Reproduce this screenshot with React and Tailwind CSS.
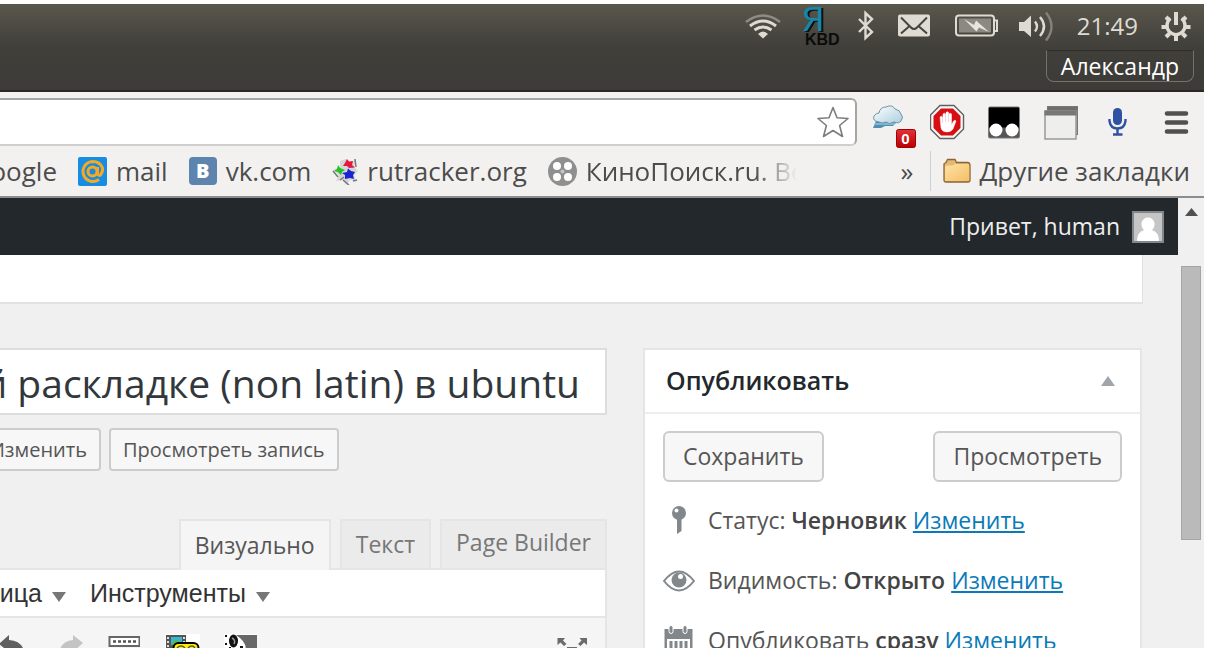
import React from 'react';

function WifiIcon() {
  return (
    <svg width="42" height="34" viewBox="741 9 42 34" fill="none" aria-hidden="true">
      <path d="M744 22 Q761 9 778 22" stroke="#8e8b82" strokeWidth="2.6" />
      <path d="M748 26 Q761 16 774 26" stroke="#dfdbd2" strokeWidth="3" />
      <path d="M752.500 30 Q761 24 769.500 30" stroke="#dfdbd2" strokeWidth="3" />
      <path d="M756 34 Q761 29 766 34 L761 38.500Z" fill="#dfdbd2" />
    </svg>
  );
}

function KeyboardIcon() {
  return (
    <svg width="40" height="42" viewBox="799 5 40 42" className="overflow-visible" aria-hidden="true">
      <text x="800" y="31" fontSize="37" fill="#1487ab" fontFamily='"Liberation Mono", monospace' className="drop-shadow-[2px_1px_0_#111]">Я</text>
      <text x="803" y="45" fontSize="16" fontWeight="700" fill="#0b0b0b" fontFamily='"Liberation Sans", sans-serif'>KBD</text>
    </svg>
  );
}

function BluetoothIcon() {
  return (
    <svg width="22" height="34" viewBox="855 9 22 34" fill="none" stroke="#dfdbd2" strokeWidth="2.4" aria-hidden="true">
      <path d="M857 19 L870 32 L863.500 38 V13 L870 19 L857 32" />
    </svg>
  );
}

function MailIcon() {
  return (
    <svg width="42" height="34" viewBox="893 9 42 34" aria-hidden="true">
      <rect x="896" y="14.500" width="32" height="22" rx="2" fill="#dfdbd2" />
      <path d="M899 17.500 L909 27.500 Q912 30.500 915 27.500 L925 17.500 M899 33.500 L907 26.500 M925 33.500 L917 26.500" fill="none" stroke="#45433d" strokeWidth="2" />
    </svg>
  );
}

function BatteryIcon() {
  return (
    <svg width="47" height="34" viewBox="951 9 47 34" aria-hidden="true">
      <rect x="954" y="15.500" width="38" height="20" rx="3" fill="none" stroke="#dfdbd2" strokeWidth="2" />
      <rect x="957" y="18.500" width="32" height="14" fill="#8b8982" />
      <path d="M993 20.500 H995 V31 H993" fill="none" stroke="#dfdbd2" strokeWidth="2" />
      <path d="M962 19 L972 25 L974 20.500 L987 32 L977 27.500 L974.500 31.500Z" fill="#e9e5dc" />
    </svg>
  );
}

function VolumeIcon() {
  return (
    <svg width="45" height="34" viewBox="1014 9 45 34" fill="none" strokeWidth="2.4" aria-hidden="true">
      <path d="M1017 22 H1022 L1029 15.500 V37 L1022 31 H1017Z" fill="#dfdbd2" />
      <path d="M1033 21.500 Q1037 26.500 1033 31.500" stroke="#dfdbd2" />
      <path d="M1038 17 Q1046 26.500 1038 36" stroke="#dfdbd2" />
      <path d="M1044 12.500 Q1055 26.500 1044 40.500" stroke="#85827a" />
    </svg>
  );
}

function SessionIcon() {
  return (
    <svg width="38" height="34" viewBox="1154 8 38 34" fill="none" stroke="#dfdbd2" aria-hidden="true">
      <path d="M1170.500 17.500 A9 9 0 1 0 1181.500 17.500" strokeWidth="3.4" />
      <path d="M1176 11 V24" strokeWidth="4" />
      <path d="M1161.500 26 H1167 M1185 26 H1190.500 M1176 35 V40 M1166 16 L1169.500 19.500 M1186 16 L1182.500 19.500 M1166 36 L1169.500 32.500 M1186 36 L1182.500 32.500" strokeWidth="4" />
    </svg>
  );
}

function StarIcon() {
  return (
    <svg width="34" height="34" viewBox="0 0 34 34" aria-hidden="true">
      <path d="M17 2.500 L21 12.800 L32 13.500 L23.600 20.500 L26.500 31.500 L17 25.500 L7.500 31.500 L10.400 20.500 L2 13.500 L13 12.800Z" fill="#fff" stroke="#7d7d7d" strokeWidth="1.600" strokeLinejoin="round" />
    </svg>
  );
}

function CloudIcon() {
  return (
    <svg width="43" height="46" viewBox="872 99 43 46" className="overflow-visible" aria-hidden="true">
      <defs>
        <linearGradient id="cloud" x1="0" y1="0" x2="1" y2="1">
          <stop offset="0" stopColor="#ffffff" />
          <stop offset="1" stopColor="#a9cede" />
        </linearGradient>
        <linearGradient id="badge" x1="0" y1="0" x2="0" y2="1">
          <stop offset="0" stopColor="#e3333b" />
          <stop offset="1" stopColor="#b80000" />
        </linearGradient>
      </defs>
      <path d="M876 121 H898 L893 126 H885 L881 128 H873Z" fill="#4f8fb4" />
      <path d="M874 124 H895" stroke="#a8cfe0" strokeWidth="1.200" />
      <path d="M879 122 Q872 121 874 116 Q876 113 879 113 Q880 107 886 107 Q892 104 895 109 Q900 110 901 114 Q904 117 901 121 Q899 124 894 122 Q889 125 886 122 Q882 124 879 122Z" fill="url(#cloud)" stroke="#6c94a5" strokeWidth="1" />
      <rect x="896.500" y="129.500" width="19" height="18" rx="2" fill="url(#badge)" stroke="#a40000" />
      <text x="905.500" y="144" textAnchor="middle" fontSize="15" fontWeight="700" fill="#fff" fontFamily='"Liberation Sans", sans-serif'>0</text>
    </svg>
  );
}

function AdblockIcon() {
  return (
    <svg width="43" height="46" viewBox="930 99 43 46" aria-hidden="true">
      <path d="M940 105.500 H954 L963.500 115 V129 L954 138.500 H940 L930.500 129 V115Z" fill="#f8f8f8" stroke="#606060" strokeWidth="1.400" />
      <path d="M941 108.500 H953 L960.500 116 V128 L953 135.500 H941 L933.500 128 V116Z" fill="#d80f12" />
      <path d="M940 117 q1.500 -1.500 2.500 0 V123 H943 V114 q1.500 -1.500 2.500 0 V122 H946 V112.500 q1.500 -1.500 2.600 0 V122 H949 V114 q1.500 -1.500 2.500 0 V125 L953.500 121 q2 -1.500 2.500 0 L953 129 Q951 132 947 132 Q942 132 941 128 Z" fill="#fff" stroke="#fff" strokeWidth="0.500" />
    </svg>
  );
}

function MaskIcon() {
  return (
    <svg width="41" height="46" viewBox="988 99 41 46" aria-hidden="true">
      <rect x="988.500" y="107" width="31" height="31" rx="1.500" fill="#565656" stroke="#777" />
      <rect x="989" y="107.500" width="30" height="20" fill="#000" />
      <circle cx="996" cy="130" r="6.500" fill="#fff" />
      <circle cx="1012" cy="130" r="6.500" fill="#fff" />
    </svg>
  );
}

function WindowsIcon() {
  return (
    <svg width="46" height="46" viewBox="1044 99 46 46" aria-hidden="true">
      <rect x="1047.500" y="106.500" width="30" height="28" fill="#aaa" stroke="#777" />
      <rect x="1048" y="107" width="29" height="4" fill="#6e6e6e" />
      <rect x="1045" y="111" width="31" height="28" fill="#eeeeec" stroke="#999" strokeWidth="1.500" />
      <rect x="1044.500" y="110.500" width="32" height="5" fill="#777" />
    </svg>
  );
}

function MicIcon() {
  return (
    <svg width="42" height="46" viewBox="1105 99 42 46" fill="none" aria-hidden="true">
      <rect x="1113" y="108" width="9" height="17" rx="4.500" fill="#2f51a3" />
      <path d="M1109.500 119 V121 Q1110.500 128.500 1117.500 128.500 Q1124.500 128.500 1125.500 121 V119" stroke="#2f51a3" strokeWidth="2.400" />
      <path d="M1117.500 128 V134 M1113 134.500 H1122.500" stroke="#2f51a3" strokeWidth="2.400" />
    </svg>
  );
}

function MenuIcon() {
  return (
    <svg width="30" height="46" viewBox="1162 99 30 46" stroke="#505050" strokeWidth="4.600" strokeLinecap="round" aria-hidden="true">
      <path d="M1167 113.500 H1186 M1167 122.500 H1186 M1167 131.500 H1186" />
    </svg>
  );
}

function AtIcon() {
  return (
    <svg width="29" height="29" viewBox="0 0 29 29" fill="none" stroke="#f7a823" aria-hidden="true">
      <rect width="29" height="29" rx="2" fill="#168de2" stroke="none" />
      <circle cx="14.500" cy="14.500" r="4.500" strokeWidth="3" />
      <path d="M19.500 10 V16 Q20 19 22.500 18 Q25 15 24.500 11 Q22 4.500 14.500 4.500 A10 10 0 1 0 21 22.500" strokeWidth="3" />
    </svg>
  );
}

function VkIcon() {
  return (
    <span aria-hidden="true" className="flex size-7 items-center justify-center rounded-sm bg-[#5d84ae] text-xl leading-none font-black text-white">
      B
    </span>
  );
}

function TrackerIcon() {
  return (
    <svg width="26" height="28" viewBox="335 158 26 28" aria-hidden="true">
      <path d="M349 160 L353 164 L359 160 L357 168 L361 172 L357 176 L359 182 L353 181 L349 186 L346 181 L339 182 L342 176 L336 171 L343 168 L343 162Z" fill="#d6d6d6" />
      <path d="M358 160 L359 168 M343 181 L347 178 M336 172 L341 178 M356 182 L360 181 M352 186 L346 181" stroke="#777" strokeWidth="1.500" />
      <path d="M350 160 L352 162.500 L356 162 L355 166 L358 168.500 L352 169 L350 167 L346 167 L348 164Z" fill="#e5173f" />
      <path d="M341 166 L343 169 L348 171 L345 173 L344 176 L341 173 L337 172 L340 170Z" fill="#21c321" />
      <path d="M351 169.500 L354 172 L358 173 L356 176 L357 180 L353 179 L348 180 L348 176 L345 174 L350 173Z" fill="#1a24d4" />
    </svg>
  );
}

function ReelIcon() {
  return (
    <svg width="29" height="29" viewBox="0 0 29 29" fill="#fff" aria-hidden="true">
      <circle cx="14.500" cy="14.500" r="14.500" fill="#8f8f8f" />
      <circle cx="9" cy="9" r="4" />
      <circle cx="20" cy="9" r="4" />
      <circle cx="9" cy="20" r="4" />
      <circle cx="20" cy="20" r="4" />
      <circle cx="14.500" cy="14.500" r="2" fill="#c4c4c4" />
    </svg>
  );
}

function FolderIcon() {
  return (
    <svg width="28" height="26" viewBox="0 0 28 26" aria-hidden="true">
      <defs>
        <linearGradient id="folder" x1="0" y1="0" x2="1" y2="1">
          <stop offset="0" stopColor="#ffe2a4" />
          <stop offset="1" stopColor="#f3bf68" />
        </linearGradient>
      </defs>
      <path d="M1 22 V6 Q2 5 3 4.500 L4.500 1.500 H12 L13.500 4.500 H25 Q27 5 27 7 V22 Q27 24 25 24 H3 Q1 24 1 22Z" fill="#e3b976" stroke="#8d6533" strokeWidth="1.300" />
      <path d="M2 9 Q2 7.500 4 7.500 H10 L12 6 H25 Q26.200 6 26.200 8 V23 H2Z" fill="url(#folder)" />
    </svg>
  );
}

function PinIcon() {
  return (
    <svg width="32" height="32" viewBox="663 504 32 32" aria-hidden="true">
      <circle cx="679" cy="513" r="7" fill="#82878c" />
      <path d="M677 519 H681.500 V531 L677 534Z" fill="#82878c" />
      <circle cx="676.500" cy="510.500" r="2" fill="#fff" />
    </svg>
  );
}

function EyeIcon() {
  return (
    <svg width="32" height="32" viewBox="663 565 32 32" aria-hidden="true">
      <path d="M664 582 Q679 563 694 582 Q679 601 664 582Z" fill="#fff" stroke="#82878c" strokeWidth="2" />
      <circle cx="679" cy="581" r="7.500" fill="#82878c" />
      <circle cx="680.500" cy="577.500" r="2.500" fill="#fff" />
    </svg>
  );
}

function CalendarIcon() {
  return (
    <svg width="32" height="32" viewBox="663 624 32 32" fill="#82878c" aria-hidden="true">
      <path d="M664.500 629 H692.500 V656 H664.500Z M667 639 V654 H690 V639Z" fillRule="evenodd" />
      <rect x="669" y="625.500" width="4" height="8" rx="2" stroke="#fff" />
      <rect x="683" y="625.500" width="4" height="8" rx="2" stroke="#fff" />
      <path d="M669.500 641 H672.500 V653 H669.500Z M674.500 641 H677.500 V653 H674.500Z M679.500 641 H682.500 V653 H679.500Z M684.500 641 H687.500 V653 H684.500Z" />
    </svg>
  );
}

function UndoIcon() {
  return (
    <svg width="32" height="32" viewBox="-4 626 32 32" aria-hidden="true">
      <path d="M-1 644 L9 635 V640 Q24 641 25 656 H20 Q18 648 9 648 V652Z" fill="#5f5f5f" />
    </svg>
  );
}

function RedoIcon() {
  return (
    <svg width="32" height="32" viewBox="52 626 32 32" aria-hidden="true">
      <path d="M83 643 L73 635 V640 Q60 641 58 656 H63 Q65 648 73 648 V652Z" fill="#c4c4c4" />
    </svg>
  );
}

function KeysIcon() {
  return (
    <svg width="32" height="32" viewBox="110 626 32 32" aria-hidden="true">
      <rect x="111.500" y="637" width="30" height="9" fill="#fff" stroke="#666" strokeWidth="2" />
      <path d="M115 641.500 H139" stroke="#555" strokeWidth="2.500" strokeDasharray="3 2" />
    </svg>
  );
}

function MediaIcon() {
  return (
    <svg width="36" height="32" viewBox="166 626 36 32" aria-hidden="true">
      <rect x="167" y="634" width="35" height="24" fill="#fff" />
      <rect x="168" y="635" width="20" height="22" fill="#555" />
      <path d="M170 637 V657 M186 637 V657" stroke="#ddd" strokeWidth="2" strokeDasharray="2 2" />
      <rect x="173" y="637" width="11" height="8" fill="#35b6d8" />
      <path d="M173 645 L178 639 L184 645Z" fill="#61b53c" />
      <rect x="175.500" y="643" width="25" height="20" rx="5" fill="#ffee00" stroke="#000" strokeWidth="2" />
      <path d="M179 648 Q183 644 187 648 M190 648 Q194 644 197 648" fill="none" stroke="#555" strokeWidth="1.500" />
    </svg>
  );
}

function PortraitIcon() {
  return (
    <svg width="34" height="32" viewBox="224 626 34 32" aria-hidden="true">
      <rect x="224" y="634" width="33" height="24" fill="#fff" />
      <path d="M236 635 H257 V656 H244 Q250 644 236 635Z" fill="#686868" />
      <ellipse cx="233.500" cy="641" rx="4.500" ry="6.500" fill="#111" />
      <path d="M232 638 Q236 640 234 644" fill="none" stroke="#999" strokeWidth="1.500" />
      <path d="M225 635 H227 V637 H225Z M225 643 H227 V645 H225Z M229 647 H231 V649 H229Z M240 646 H243 V649 H240Z" fill="#111" />
    </svg>
  );
}

function ExpandIcon() {
  return (
    <svg width="32" height="32" viewBox="556 626 32 32" fill="#6b6b6b" aria-hidden="true">
      <path d="M557.500 638 H565 L563 640.500 L566.500 644 L564 646 L560.500 642.500 L557.500 645Z" />
      <path d="M587 638 H579.500 L581.500 640.500 L578 644 L580.500 646 L584 642.500 L587 645Z" />
      <path d="M567 647 H577 V649 H567Z" />
    </svg>
  );
}

const trayButtons = [
  ['Сеть', WifiIcon],
  ['Раскладка', KeyboardIcon],
  ['Bluetooth', BluetoothIcon],
  ['Почта', MailIcon],
  ['Батарея', BatteryIcon],
  ['Звук', VolumeIcon],
];

const extensions = [
  ['Погода', CloudIcon],
  ['AdBlock', AdblockIcon],
  ['Маска', MaskIcon],
  ['Окна', WindowsIcon],
  ['Голос', MicIcon],
  ['Меню', MenuIcon],
];

function SystemPanel() {
  return (
    <header className="flex h-[88px] shrink-0 flex-col items-end border-b-2 border-[#2c2725] bg-linear-to-b from-[#5a574c] via-[#403f3a] via-50% to-[#3c3b37] pr-[12px] text-[#dfdbd2]">
      <div className="flex h-[43px] items-center gap-4">
        {trayButtons.map(([label, Icon]) => (
          <button key={label} type="button" aria-label={label}>
            <Icon />
          </button>
        ))}
        <time className="text-2xl font-medium">21:49</time>
        <button type="button" aria-label="Сеанс">
          <SessionIcon />
        </button>
      </div>
      <button type="button" className="mt-[3px] -mr-[2px] h-8 rounded-b-lg border border-[#74726a] border-t-[#2f2e2a] px-[14px] text-[23px] leading-none font-medium text-white">
        Александр
      </button>
    </header>
  );
}

function Bookmark({ icon, children }) {
  return (
    <a href="#" className="flex shrink-0 items-center gap-[9px]">
      {icon}
      {children}
    </a>
  );
}

function BrowserBar() {
  return (
    <nav className="shrink-0 border-b-2 border-[#8b8d8e] bg-[#f2f1f0] pt-[6px] text-[#4c4c4c]">
      <div className="flex h-12 items-center gap-[15px] pr-[12px]">
        <div className="flex h-12 min-w-0 flex-1 items-center rounded-r-md border-2 border-l-0 border-[#a5a5a5] border-b-[#cfcfcf] bg-white pr-[5px]">
          <input aria-label="Адрес" className="h-full min-w-0 flex-1 outline-none" />
          <button type="button" aria-label="Добавить в закладки">
            <StarIcon />
          </button>
        </div>
        {extensions.map(([label, Icon]) => (
          <button key={label} type="button" aria-label={label}>
            <Icon />
          </button>
        ))}
      </div>
      <div className="flex h-[50px] items-center overflow-hidden pr-[14px] text-[26px] font-medium whitespace-nowrap">
        <div className="flex min-w-0 flex-1 items-center gap-[21px] overflow-hidden">
          <div className="flex w-[57px] shrink-0 justify-end">
            <Bookmark>Google</Bookmark>
          </div>
          <Bookmark icon={<AtIcon />}>mail</Bookmark>
          <Bookmark icon={<VkIcon />}>vk.com</Bookmark>
          <Bookmark icon={<TrackerIcon />}>rutracker.org</Bookmark>
          <a href="#" className="flex w-[249px] items-center gap-[9px] overflow-hidden">
            <ReelIcon />
            <span className="min-w-0 flex-1 overflow-hidden mask-r-from-80%">КиноПоиск.ru. Все</span>
          </a>
        </div>
        <button type="button" className="px-4">»</button>
        <span className="mr-3 h-10 w-px bg-[#c8d2dc]" />
        <Bookmark icon={<FolderIcon />}>Другие закладки</Bookmark>
      </div>
    </nav>
  );
}

function AdminBar() {
  return (
    <div className="flex h-[57px] shrink-0 items-center justify-end gap-3 bg-[#23282d] pr-[14px] text-[23px] text-[#eee]">
      <a href="#">Привет, human</a>
      <svg width="32" height="32" viewBox="0 0 32 32" aria-hidden="true">
        <rect x="1" y="1" width="30" height="30" fill="#c5c5c5" stroke="#82878c" strokeWidth="2" />
        <path d="M5 30 Q5 21 12 19 Q9 16 9.500 12 Q11 6.500 16 6.500 Q21 6.500 22.500 12 Q23 16 20 19 Q27 21 27 30Z" fill="#fff" />
      </svg>
    </div>
  );
}

function SmallButton({ children }) {
  return (
    <button type="button" className="h-[43px] rounded border-2 border-[#ccc] bg-[#f7f7f7] px-3 text-xl leading-none text-[#555]">
      {children}
    </button>
  );
}

function ActionButton({ children }) {
  return (
    <button type="button" className="h-[51px] rounded-md border-2 border-[#ccc] bg-[#f7f7f7] px-[18px] text-[23px] leading-none text-[#555]">
      {children}
    </button>
  );
}

function MenuButton({ children }) {
  return (
    <button type="button" className="flex items-center gap-[10px]">
      {children}
      <svg width="14" height="10" viewBox="0 0 14 10" className="mt-2" aria-hidden="true">
        <path d="M0 0 H14 L7 10Z" fill="#777" />
      </svg>
    </button>
  );
}

function Editor() {
  return (
    <div className="-ml-20 min-w-0 flex-1">
      <input
        aria-label="Заголовок"
        defaultValue="й раскладке (non latin) в ubuntu"
        className="block h-[67px] w-full border-2 border-[#ddd] bg-white pt-[2px] pr-[25px] text-right text-[39px] text-[#32373c] outline-none"
      />
      <div className="mt-[13px] flex justify-start gap-2">
        <div className="flex w-[181px] justify-end">
          <SmallButton>Изменить</SmallButton>
        </div>
        <SmallButton>Просмотреть запись</SmallButton>
      </div>
      <div role="tablist" className="relative z-10 mt-12 -mb-[2px] flex justify-end gap-[9px] text-[23px] leading-none text-[#777]">
        <button type="button" role="tab" aria-selected="true" className="h-[51px] border-2 border-b-0 border-[#e5e5e5] bg-[#f5f5f5] px-[14px] text-[#555]">
          Визуально
        </button>
        <button type="button" role="tab" aria-selected="false" className="h-[51px] border-2 border-[#e5e5e5] bg-[#ebebeb] px-[14px]">
          Текст
        </button>
        <button type="button" role="tab" aria-selected="false" className="h-[51px] border-2 border-[#e5e5e5] bg-[#ebebeb] px-[14px] pb-1">
          Page Builder
        </button>
      </div>
      <div className="border-2 border-[#e5e5e5]">
        <div className="flex h-12 items-center gap-6 border-b-2 border-[#e5e5e5] bg-white font-['Liberation_Sans',sans-serif] text-[25px] leading-none text-[#333]">
          <div className="flex w-36 justify-end">
            <MenuButton>Таблица</MenuButton>
          </div>
          <MenuButton>Инструменты</MenuButton>
        </div>
        <div className="flex items-start gap-6 bg-[#f5f5f5] pt-2 pr-[17px] pb-6 pl-[74px]">
          <button type="button" aria-label="Отменить"><UndoIcon /></button>
          <button type="button" aria-label="Повторить"><RedoIcon /></button>
          <button type="button" aria-label="Клавиатура"><KeysIcon /></button>
          <button type="button" aria-label="Медиа"><MediaIcon /></button>
          <button type="button" aria-label="Портрет"><PortraitIcon /></button>
          <button type="button" aria-label="На весь экран" className="ml-auto"><ExpandIcon /></button>
        </div>
      </div>
    </div>
  );
}

const publishRows = [
  { icon: PinIcon, label: 'Статус:', value: 'Черновик' },
  { icon: EyeIcon, label: 'Видимость:', value: 'Открыто' },
  { icon: CalendarIcon, label: 'Опубликовать', value: 'сразу' },
];

function PublishBox() {
  return (
    <aside className="w-[499px] shrink-0 border-2 border-[#e5e5e5] bg-white text-[23px] text-[#555]">
      <div className="flex h-[64px] items-center justify-between border-b-2 border-[#eee] pr-[25px] pl-[21px]">
        <h2 className="text-[25px] font-semibold text-[#23282d]">Опубликовать</h2>
        <button type="button" aria-label="Свернуть">
          <svg width="14" height="10" viewBox="0 0 14 10" aria-hidden="true">
            <path d="M0 10 H14 L7 0Z" fill="#a0a5aa" />
          </svg>
        </button>
      </div>
      <div className="px-[18px] pt-[17px]">
        <div className="flex justify-between">
          <ActionButton>Сохранить</ActionButton>
          <ActionButton>Просмотреть</ActionButton>
        </div>
        <ul className="mt-2 whitespace-nowrap">
          {publishRows.map(({ icon: Icon, label, value }) => (
            <li key={label} className="flex h-[60px] items-center gap-[13px]">
              <Icon />
              <span>
                {label} <b className="font-semibold text-[#444]">{value}</b>{' '}
                <a href="#" className="text-[#0a7ab8] underline decoration-2 underline-offset-2">Изменить</a>
              </span>
            </li>
          ))}
        </ul>
      </div>
    </aside>
  );
}

export default function App() {
  return (
    <div className="flex h-screen flex-col overflow-hidden bg-white pt-1 pr-[2px] font-['Open_Sans',sans-serif]">
      <SystemPanel />
      <BrowserBar />
      <div className="flex min-h-0 flex-1">
        <div className="flex min-w-0 flex-1 flex-col overflow-hidden bg-[#f0f0f0]">
          <AdminBar />
          <div className="mr-[35px] h-[49px] shrink-0 border-r border-b-2 border-[#e2e2e2] bg-white" />
          <main className="mt-11 flex items-start gap-9 pr-9">
            <Editor />
            <PublishBox />
          </main>
        </div>
        <div className="flex w-[26px] shrink-0 flex-col items-center bg-[#f0f0f0]">
          <button type="button" aria-label="Вверх" className="flex h-[68px] items-start pt-[10px]">
            <svg width="13" height="8" viewBox="0 0 13 8" aria-hidden="true">
              <path d="M0 8 H13 L6.500 0Z" fill="#505050" />
            </svg>
          </button>
          <div className="h-[274px] w-5 border border-[#a5a5a5] bg-[#bababa]" />
        </div>
      </div>
    </div>
  );
}
